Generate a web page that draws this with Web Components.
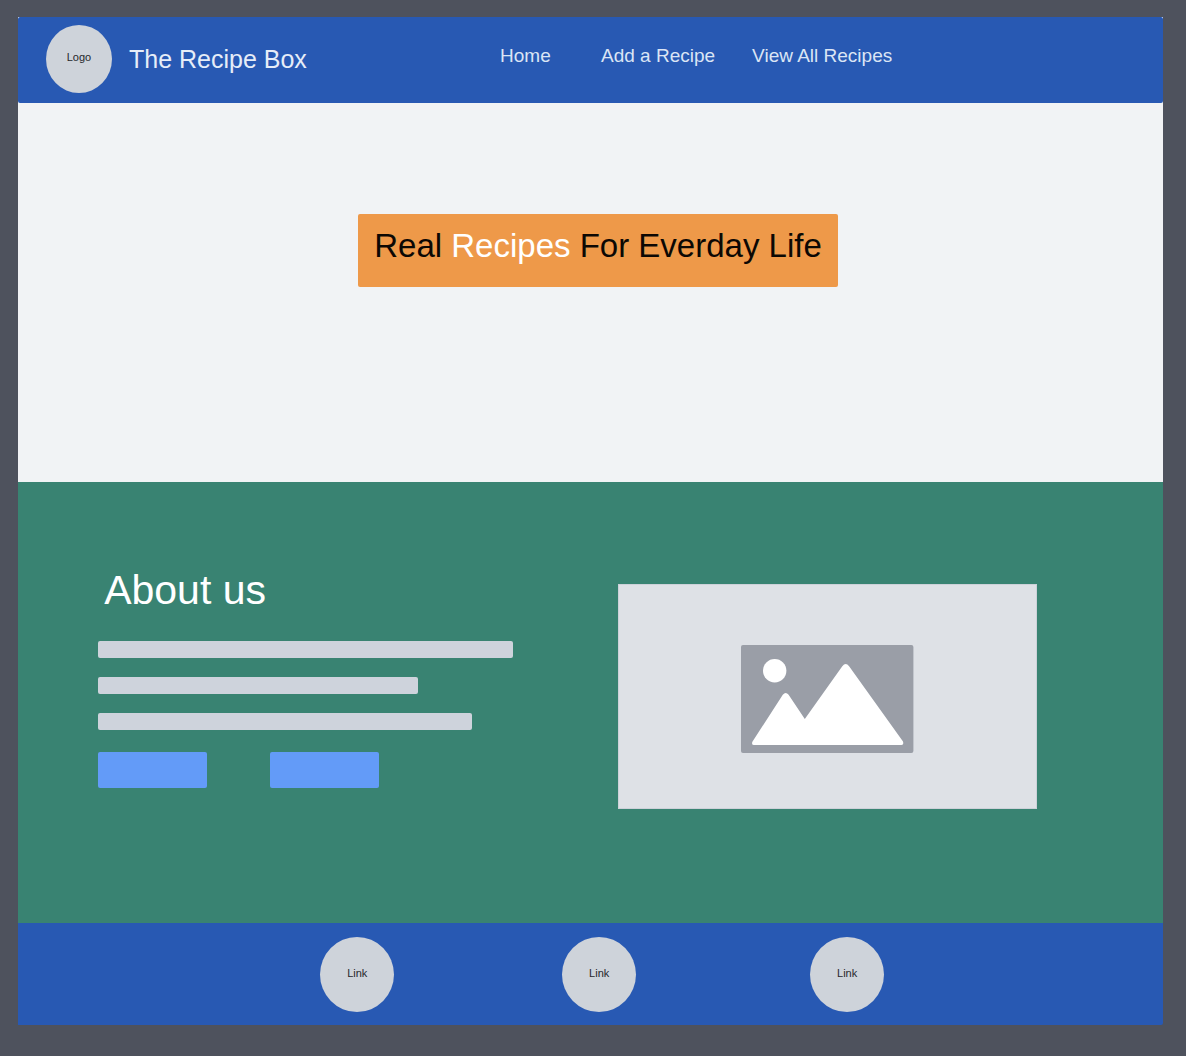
<!DOCTYPE html>
<html lang="en">
<head>
<meta charset="utf-8">
<meta name="viewport" content="width=device-width, initial-scale=1">
<title>The Recipe Box</title>
<style>
  :root {
    --blue: #2859b3;
    --green: #398372;
    --orange: #ee9949;
    --mist: #f1f3f5;
    --chip: #ced3da;
    --action: #639bf8;
  }
  body {
    margin: 0;
    padding: 17px 23px 31px 18px;
    background: #4e525d;
    font-family: "Liberation Sans", Arial, sans-serif;
  }
</style>
</head>
<body>
<recipe-page>
  <site-header slot="header">
    <round-link slot="logo" href="#home" style="--w: 66px; --h: 68px">Logo</round-link>
    <span slot="name">The Recipe Box</span>
    <nav-link href="#home">Home</nav-link>
    <nav-link href="#add">Add a Recipe</nav-link>
    <nav-link href="#all">View All Recipes</nav-link>
  </site-header>
  <hero-banner>Real <span style="color: #fff">Recipes</span> For Everday Life</hero-banner>
  <about-section>
    <span slot="title">About us</span>
    <text-bar style="max-width: 415px"></text-bar>
    <text-bar style="max-width: 320px"></text-bar>
    <text-bar style="max-width: 374px"></text-bar>
    <action-button slot="actions" label="First action"></action-button>
    <action-button slot="actions" label="Second action"></action-button>
    <image-placeholder slot="media"></image-placeholder>
  </about-section>
  <site-footer slot="footer">
    <round-link href="#one">Link</round-link>
    <round-link href="#two">Link</round-link>
    <round-link href="#three">Link</round-link>
  </site-footer>
</recipe-page>

<script>
  const define = (name, html, setup) => {
    const template = document.createElement('template');
    template.innerHTML = html;
    customElements.define(name, class extends HTMLElement {
      constructor() {
        super();
        this.attachShadow({ mode: 'open' }).append(template.content.cloneNode(true));
      }
      connectedCallback() {
        if (setup) setup(this, this.shadowRoot);
      }
    });
  };

  const passHref = (host, root) => {
    root.querySelector('a').href = host.getAttribute('href') || '#';
  };

  define('recipe-page', `
    <style>
      :host { display: flex; flex-direction: column; }
      main { display: flex; flex-direction: column; }
    </style>
    <slot name="header"></slot>
    <main><slot></slot></main>
    <slot name="footer"></slot>`);

  define('site-header', `
    <style>
      :host { display: block; background: var(--mist); }
      header {
        display: grid; grid-template-columns: 42.1% 1fr; align-items: start;
        min-height: 86px; box-sizing: border-box; padding-top: 8px;
        background: var(--blue); border-radius: 2px;
      }
      .brand { display: flex; align-items: center; gap: 17px; padding-left: 28px; }
      .name { font-size: 25px; line-height: 28px; color: #e6edf8; white-space: nowrap; }
      nav { display: flex; gap: 37px; padding-top: 20px; }
      ::slotted(nav-link:first-of-type) { min-width: 64px; }
    </style>
    <header>
      <div class="brand">
        <slot name="logo"></slot>
        <div class="name"><slot name="name"></slot></div>
      </div>
      <nav><slot></slot></nav>
    </header>`);

  define('nav-link', `
    <style>
      :host { display: block; }
      a { font-size: 19px; line-height: 22px; color: #dbe5f5; text-decoration: none; white-space: nowrap; }
    </style>
    <a><slot></slot></a>`, passHref);

  define('round-link', `
    <style>
      :host { display: block; }
      a {
        display: flex; align-items: center; justify-content: center;
        width: var(--w, 74px); height: var(--h, 75px); box-sizing: border-box; padding-bottom: 3px;
        border-radius: 50%; background: var(--chip);
        font-size: 11px; line-height: 13px;
        color: #26282c; text-decoration: none;
      }
    </style>
    <a><slot></slot></a>`, passHref);

  define('hero-banner', `
    <style>
      :host { display: block; }
      section {
        display: flex; justify-content: center; align-items: flex-start;
        min-height: 379px; box-sizing: border-box; padding: 111px 0 0 15px;
        background: var(--mist);
      }
      h1 {
        margin: 0; padding: 13px 16px 22px; border-radius: 2px; background: var(--orange);
        font-size: 33px; line-height: 38px; font-weight: 400; color: #0c0804;
      }
    </style>
    <section><h1><slot></slot></h1></section>`);

  define('about-section', `
    <style>
      :host { display: block; }
      section {
        display: grid; grid-template-columns: 520fr 419fr; align-items: start;
        min-height: 441px; box-sizing: border-box; padding: 84px 11% 0 7%;
        background: var(--green);
      }
      h2 {
        margin: 0 0 27px; padding-left: 6px;
        font-size: 41px; line-height: 48px; font-weight: 400; color: #fff;
      }
      .lines { display: flex; flex-direction: column; gap: 19px; }
      .actions { display: flex; gap: 63px; padding-top: 22px; }
      .media { padding-top: 18px; }
    </style>
    <section>
      <div>
        <h2><slot name="title"></slot></h2>
        <div class="lines"><slot></slot></div>
        <div class="actions"><slot name="actions"></slot></div>
      </div>
      <div class="media"><slot name="media"></slot></div>
    </section>`);

  define('text-bar', `
    <style>
      :host { display: block; height: 17px; border-radius: 2px; background: #ced3dc; }
    </style>`);

  define('action-button', `
    <style>
      :host { display: block; }
      button {
        display: block; width: 109px; height: 36px; padding: 0;
        border: 0; border-radius: 2px; background: var(--action); cursor: pointer;
      }
    </style>
    <button type="button"></button>`, (host, root) => {
      root.querySelector('button').setAttribute('aria-label', host.getAttribute('label'));
    });

  define('image-placeholder', `
    <style>
      :host {
        display: flex; justify-content: center; height: 225px; box-sizing: border-box;
        padding-top: 60px; border: 1px solid #cdd1d9; background: #dee1e6;
      }
      svg { display: block; width: 173px; height: 108px; }
    </style>
    <svg viewBox="0 0 173 108" aria-hidden="true">
      <rect width="172.400" height="108" rx="2" fill="#9a9ea7"/>
      <circle cx="33.700" cy="25.800" r="11.700" fill="#fff"/>
      <path fill="#fff" d="M11.400 96.800 41.800 49.800Q44.700 46 47.600 49.800L63.800 74.100 101.300 21.300Q104.700 16.800 108.100 21.300L162 96.600Q163 100 160.500 100H13Q10.300 100 11.400 96.800Z"/>
    </svg>`);

  define('site-footer', `
    <style>
      :host { display: block; }
      footer {
        min-height: 102px; box-sizing: border-box; padding: 14px 0 13px 26.400%;
        background: var(--blue); border-radius: 0 0 2px 0;
      }
      nav { display: grid; grid-template-columns: 242fr 248fr 353fr; }
    </style>
    <footer><nav><slot></slot></nav></footer>`);
</script>
</body>
</html>
